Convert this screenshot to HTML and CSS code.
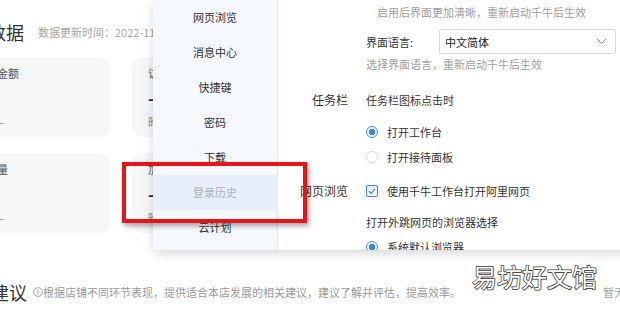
FILE: index.html
```html
<html>
    <head>
        <link rel="stylesheet" href="styles.css">
    </head>
    <body>
        <div class="dash">
            <div class="head">
                <h2 class="title">数据</h2>
                <span class="updated">数据更新时间：2022-11-18 09:30:00</span>
            </div>

            <div class="cards">
                <div class="card">
                    <div class="card-label">支付金额</div>
                    <div class="card-value">-</div>
                    <div class="card-compare">昨日 -</div>
                </div>
                <div class="card">
                    <div class="card-label">访客数</div>
                    <div class="card-value">-</div>
                    <div class="card-compare">昨日 -</div>
                </div>
                <div class="card">
                    <div class="card-label">浏览量</div>
                    <div class="card-value">-</div>
                    <div class="card-compare">昨日 -</div>
                </div>
                <div class="card">
                    <div class="card-label">加购人数</div>
                    <div class="card-value">-</div>
                    <div class="card-compare">昨日 -</div>
                </div>
            </div>

            <div class="tips">
                <h2 class="title tips-title">建议</h2>
                <span class="tip-note">
                    <svg class="info" width="10" height="10" viewBox="0 0 10 10">
                        <circle cx="5" cy="5" r="4.3" fill="none" stroke="#999" stroke-width="0.9"/>
                        <rect x="4.55" y="2.2" width="0.9" height="0.9" fill="#999"/>
                        <rect x="4.55" y="3.8" width="0.9" height="3.6" fill="#999"/>
                    </svg>根据店铺不同环节表现，提供适合本店发展的相关建议，建议了解并评估，提高效率。
                </span>
                <span class="tip-empty">暂无建议</span>
            </div>
        </div>

        <div class="modal">
            <nav class="side">
                <div class="side-item">网页浏览</div>
                <div class="side-item">消息中心</div>
                <div class="side-item">快捷键</div>
                <div class="side-item">密码</div>
                <div class="side-item">下载</div>
                <div class="side-item active">登录历史</div>
                <div class="side-item">云计划</div>
            </nav>

            <div class="settings">
                <div class="row r-hint1">
                    <div class="hint indent">启用后界面更加清晰，重新启动千牛后生效</div>
                </div>
                <div class="row r-lang">
                    <div class="field">
                        <span class="field-name">界面语言:</span>
                        <div class="select">
                            <span>中文简体</span>
                            <svg width="11" height="7" viewBox="0 0 11 7">
                                <polyline points="1,1 5.5,5.5 10,1" fill="none" stroke="#8c8c8c" stroke-width="1"/>
                            </svg>
                        </div>
                    </div>
                </div>
                <div class="row r-hint2">
                    <div class="hint">选择界面语言，重新启动千牛后生效</div>
                </div>
                <div class="row r-task">
                    <div class="label">任务栏</div>
                    <div class="text">任务栏图标点击时</div>
                </div>
                <div class="row r-radio1">
                    <div class="option"><span class="radio checked"></span>打开工作台</div>
                </div>
                <div class="row r-radio2">
                    <div class="option"><span class="radio"></span>打开接待面板</div>
                </div>
                <div class="row r-web">
                    <div class="label">网页浏览</div>
                    <div class="option">
                        <span class="checkbox">
                            <svg width="10" height="10" viewBox="0 0 10 10">
                                <polyline points="2,5.2 4.2,7.3 8,2.8" fill="none" stroke="#3a86e8" stroke-width="1.3"/>
                            </svg>
                        </span>使用千牛工作台打开阿里网页
                    </div>
                </div>
                <div class="row r-ext">
                    <div class="text">打开外跳网页的浏览器选择</div>
                </div>
                <div class="row r-radio3">
                    <div class="option"><span class="radio checked"></span>系统默认浏览器</div>
                </div>
            </div>
        </div>

        <div class="mark"></div>

        <div class="watermark">易坊好文馆</div>
    </body>
</html>
```

FILE: styles.css
```css
body {
    margin: 0;
    width: 620px;
    height: 309px;
    overflow: hidden;
    position: relative;
    background: #ffffff;
    font-family: "Noto Sans CJK SC", "Noto Sans", sans-serif;
    color: #333333;
}
.dash {
    width: 659px;
    margin-left: -12px;
    padding-top: 20px;
}
.head {
    display: flex;
    align-items: center;
    height: 24px;
}
.title {
    margin: 0;
    font-size: 18px;
    font-weight: normal;
    line-height: 24px;
    color: #333333;
}
.tips-title {
    margin-left: 3px;
}
.updated {
    margin-left: 14px;
    font-size: 11px;
    color: #a6a6a6;
}
.cards {
    display: grid;
    grid-template-columns: 151px 151px;
    column-gap: 22px;
    row-gap: 16px;
    margin: 13px 0 0 -29px;
}
.card {
    height: 80px;
    box-sizing: border-box;
    padding: 9px 16px 0 16px;
    border-radius: 10px;
    background: #f6f7f9;
}
.card-label {
    font-size: 11px;
    line-height: 14px;
    color: #555555;
}
.card-value {
    margin-top: 8px;
    font-size: 16px;
    font-weight: bold;
    line-height: 20px;
    color: #222222;
}
.card-compare {
    margin-top: 7px;
    font-size: 11px;
    line-height: 14px;
    color: #888888;
}
.tips {
    display: flex;
    align-items: center;
    margin-top: 47px;
    height: 24px;
}
.tip-note {
    display: flex;
    align-items: center;
    margin-left: 6px;
    font-size: 11px;
    color: #9a9a9a;
}
.info {
    width: 10px;
}
.tip-empty {
    margin-left: auto;
    font-size: 11px;
    color: #a6a6a6;
}

/* settings dialog */
.modal {
    position: absolute;
    left: 153px;
    top: 0;
    width: 490px;
    height: 250px;
    display: grid;
    grid-template-columns: 125px 1fr;
    background: #ffffff;
    box-shadow: 0 3px 10px rgba(0, 0, 0, 0.16);
    overflow: hidden;
}
.side {
    background: #f5f8fe;
    border-right: 1px solid #e4e8f0;
}
.side-item {
    height: 35px;
    line-height: 35px;
    text-align: center;
    font-size: 11px;
    color: #333333;
}
.side-item.active {
    background: #e7eefc;
    color: #a9b1c6;
}
.settings {
    display: flex;
    flex-direction: column;
    padding-left: 88px;
}
.row {
    position: relative;
    line-height: 16px;
    font-size: 11px;
}
.label {
    position: absolute;
    right: 100%;
    top: 0;
    margin-right: 18px;
    white-space: nowrap;
    font-size: 12px;
    color: #333333;
}
.hint {
    color: #a0a0a0;
}
.indent {
    padding-left: 11px;
}
.text {
    color: #333333;
}
.r-hint1 { margin-top: 4px; }
.r-lang { margin-top: 9px; }
.r-hint2 { margin-top: 2px; }
.r-task { margin-top: 20px; }
.r-radio1 { margin-top: 16px; }
.r-radio2 { margin-top: 9px; }
.r-web { margin-top: 18px; }
.r-ext { margin-top: 15px; }
.r-radio3 { margin-top: 9px; }
.field {
    display: flex;
    align-items: center;
}
.field-name {
    width: 73px;
    color: #333333;
}
.select {
    width: 177px;
    height: 25px;
    box-sizing: border-box;
    display: flex;
    align-items: center;
    justify-content: space-between;
    padding: 0 8px 0 5px;
    border: 1px solid #d9d9d9;
    border-radius: 2px;
    color: #222222;
}
.option {
    display: flex;
    align-items: center;
    color: #333333;
}
.radio {
    width: 12px;
    height: 12px;
    box-sizing: border-box;
    margin-right: 9px;
    border: 1px solid #d9d9d9;
    border-radius: 50%;
    background: #ffffff;
}
.radio.checked {
    border: 1.5px solid #3a86e8;
    background: radial-gradient(circle, #3a86e8 0, #3a86e8 3px, #ffffff 3.6px);
}
.checkbox {
    width: 12px;
    height: 12px;
    box-sizing: border-box;
    margin-right: 9px;
    display: flex;
    align-items: center;
    justify-content: center;
    border: 1px solid #3a86e8;
    border-radius: 2px;
    background: #f2f7ff;
}

/* annotation overlay */
.mark {
    position: absolute;
    left: 122px;
    top: 162px;
    width: 185px;
    height: 61px;
    box-sizing: border-box;
    border: 4px solid #e8141b;
    box-shadow: 2px 3px 5px rgba(0, 0, 0, 0.35);
}
.watermark {
    position: absolute;
    left: 472px;
    top: 261px;
    font-size: 25px;
    line-height: 30px;
    color: #ffffff;
    -webkit-text-stroke: 1.5px #3a3a3a;
    paint-order: stroke fill;
    text-shadow: 1px 1px 1px rgba(0, 0, 0, 0.2);
}
```
